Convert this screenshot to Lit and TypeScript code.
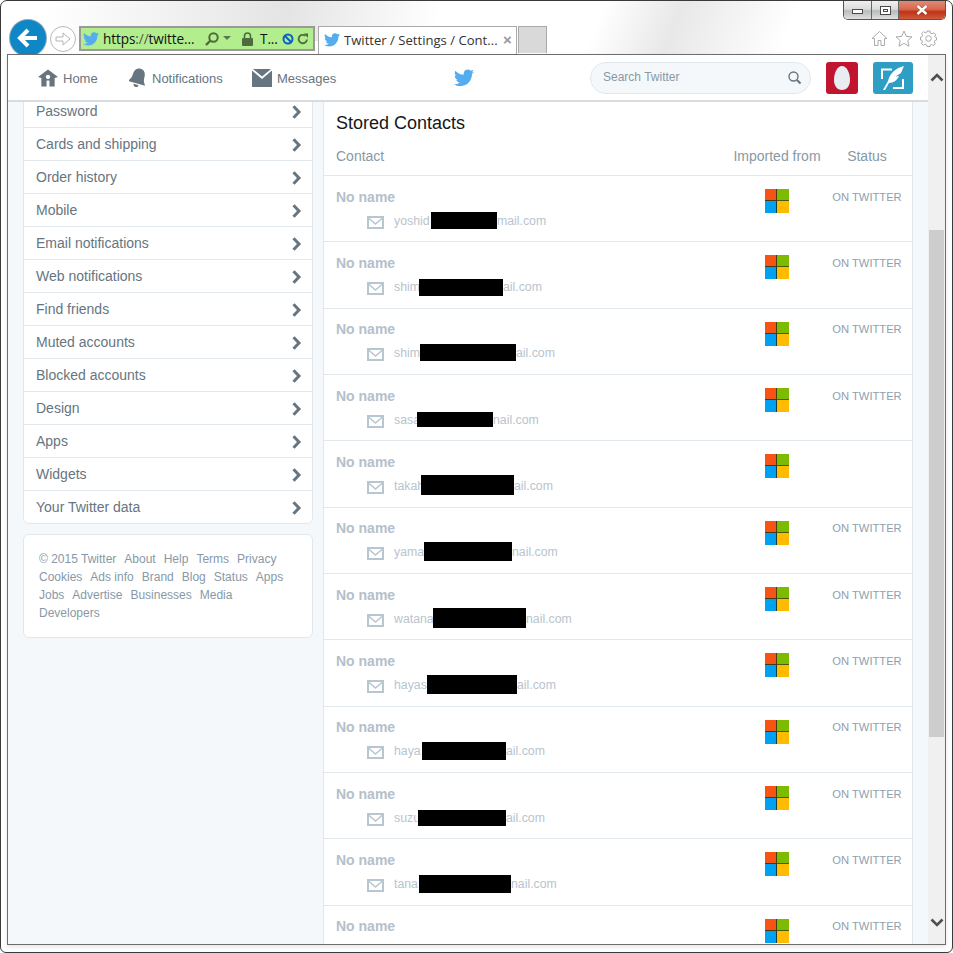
import { LitElement, html, css } from "lit";
import { customElement } from "lit/decorators.js";

const BIRD = "M23.953 4.57a10 10 0 01-2.825.775 4.958 4.958 0 002.163-3.13 9.953 9.953 0 01-3.127 1.184 4.92 4.92 0 00-8.384 4.482C7.69 8.095 4.067 6.13 1.64 3.162a4.822 4.822 0 00-.666 2.475c0 1.71.87 3.213 2.188 4.096a4.904 4.904 0 01-2.228-.616v.06a4.923 4.923 0 003.946 4.827 4.996 4.996 0 01-2.212.085 4.936 4.936 0 004.604 3.417 9.867 9.867 0 01-6.102 2.105c-.39 0-.779-.023-1.17-.067a13.995 13.995 0 007.557 2.209c9.053 0 13.998-7.496 13.998-13.985 0-.21 0-.42-.015-.63A9.935 9.935 0 0024 4.59z";

const bird = (size: number) => html`<svg width=${size} height=${size} viewBox="0 0 24 24"><path fill="#55acee" d=${BIRD}></path></svg>`;

const MENU = ["Password","Cards and shipping","Order history","Mobile","Email notifications","Web notifications","Find friends","Muted accounts","Blocked accounts","Design","Apps","Widgets","Your Twitter data"];
const FOOTER = ["© 2015 Twitter","About","Help","Terms","Privacy","Cookies","Ads info","Brand","Blog","Status","Apps","Jobs","Advertise","Businesses","Media","Developers"];

const TEXT_X = 394;
const MAIL_TOP = 211.7;
const ROW_H = 66.33;
type Contact = { a: string; x: number; w: number; y: number; h: number; b: string; on: boolean };
const CONTACTS: Contact[] = [
  { a: "yoshid", x: 431, w: 66, y: 212, h: 17, b: "mail.com", on: true },
  { a: "shim", x: 419, w: 84, y: 279, h: 17, b: "ail.com", on: true },
  { a: "shim", x: 420, w: 96, y: 344, h: 17, b: "ail.com", on: true },
  { a: "sasa", x: 417, w: 76, y: 412, h: 15, b: "nail.com", on: true },
  { a: "takah", x: 421, w: 93, y: 475, h: 20, b: "ail.com", on: false },
  { a: "yama", x: 424, w: 88, y: 542, h: 19, b: "nail.com", on: true },
  { a: "watana", x: 433, w: 93, y: 608, h: 20, b: "nail.com", on: true },
  { a: "hayas", x: 427, w: 90, y: 675, h: 19, b: "ail.com", on: true },
  { a: "haya", x: 422, w: 84, y: 742, h: 18, b: "ail.com", on: true },
  { a: "suzu", x: 418, w: 88, y: 810, h: 16, b: "ail.com", on: true },
  { a: "tana", x: 419, w: 92, y: 875, h: 18, b: "nail.com", on: true },
  { a: "user.name@hotmail.com", x: 0, w: 0, y: 0, h: 0, b: "", on: true },
];

@customElement("app-root")
export class AppRoot extends LitElement {
  static styles = css`
    :host { display: block; width: 953px; height: 953px; overflow: hidden; font-family: "Liberation Sans", Arial, sans-serif; }
    * { box-sizing: border-box; }
    svg { display: block; flex: none; }
    .window { width: 953px; height: 953px; border: 1px solid #3a3a3a; border-radius: 7px 7px 6px 6px; padding: 0 6px 7px; display: flex; flex-direction: column; overflow: hidden;
      background:
        linear-gradient(112deg, rgba(255,255,255,0) 62%, rgba(228,228,228,.85) 70%, rgba(255,255,255,0) 82%) 0 0 / 100% 60px no-repeat,
        linear-gradient(100deg, rgba(255,255,255,1) 5%, rgba(228,228,228,1) 30%, rgba(255,255,255,1) 46%) 0 0 / 100% 40px no-repeat,
        #fff; }
    .chrome { height: 53px; flex: none; display: flex; flex-direction: column; }
    .caption { height: 19px; flex: none; display: flex; justify-content: flex-end; }
    .caption-btns { display: flex; height: 19px; border: 1px solid #555; border-top: none; border-radius: 0 0 5px 5px; overflow: hidden; }
    .cbtn { width: 27px; display: flex; align-items: center; justify-content: center; background: linear-gradient(#f0f0f0 0%, #dcdcdc 45%, #b8bcbc 55%, #e0e0e0 100%); border-left: 1px solid #666; }
    .cbtn:first-child { border-left: none; }
    .cbtn.close { width: 47px; background: linear-gradient(#e08a75 0%, #d86a50 45%, #bf3218 60%, #cf5a3a 100%); }
    .min { width: 11px; height: 5px; background: #fff; border: 1px solid #4a4a4a; margin-top: 3px; }
    .max { width: 11px; height: 9px; border: 1px solid #4a4a4a; background: #fff; display: flex; align-items: center; justify-content: center; }
    .max i { display: block; width: 5px; height: 3px; border: 1px solid #4a4a4a; }
    .toolbar { flex: 1; min-height: 0; display: flex; align-items: flex-start; padding-left: 3px; }
    .back { width: 36px; height: 36px; border-radius: 50%; background: #0f86c6; box-shadow: 0 0 0 1px #8fa7b5; display: flex; align-items: center; justify-content: center; flex: none; }
    .fwd { width: 26px; height: 26px; margin: 6px 0 0 4px; border-radius: 50%; background: #fff; border: 1px solid #b8b8b8; display: flex; align-items: center; justify-content: center; flex: none; }
    .addr { width: 236px; height: 25px; margin: 6px 0 0 3px; border: 2px solid #9a9a9a; background: #b2ee8e; display: flex; align-items: center; padding-left: 2px; font-size: 13.6px; color: #111; flex: none; font-family: "Open Sans", sans-serif; letter-spacing: -.1px; white-space: nowrap; }
    .addr .url { margin-left: 4px; width: 101px; }
    .addr .url b { font-weight: 400; color: #555; }
    .addr .t { margin: 0 0 0 6px; width: 20px; }
    .tab { width: 199px; height: 28px; margin: 6px 0 0 3px; border: 1px solid #aaa; border-bottom: none; background: #fff; display: flex; align-items: center; padding: 0 0 2px 5px; font-size: 13.1px; color: #333; flex: none; font-family: "Open Sans", sans-serif; white-space: nowrap; }
    .tab span { margin-left: 4px; width: 157px; overflow: hidden; }
    .tab em { font-style: normal; font-weight: 700; font-size: 15px; color: #9a9a9a; margin-left: 2px; font-family: "Liberation Sans", sans-serif; }
    .newtab { width: 29px; height: 27px; margin: 6px 0 0 1px; background: #d9d9d9; border: 1px solid #aaa; border-bottom: none; flex: none; }
    .tools { margin: 10px 9px 0 auto; display: flex; gap: 7px; }
    .frame { flex: 1; min-height: 0; border: 1px solid #6d6d6d; display: flex; background: #f5f8fa; box-shadow: 0 2px 4px rgba(0,0,0,.1); }
    .page { flex: 1; min-width: 0; display: flex; flex-direction: column; }
    .nav { height: 47px; flex: none; background: #fff; border-bottom: 2px solid #d8dce0; display: flex; align-items: flex-start; color: #66757f; font-size: 13px; }
    .navitem { display: flex; align-items: center; height: 46px; }
    .navitem span { margin-left: 5px; }
    .home { margin-left: 30px; width: 91px; }
    .notif { width: 123px; }
    .msg { width: 202px; }
    .navbird { width: 136px; height: 46px; display: flex; align-items: center; }
    .search { width: 221px; height: 32px; margin-top: 7px; border: 1px solid #e1e8ed; border-radius: 16px; background: #f5f8fa; display: flex; align-items: center; justify-content: space-between; padding: 0 8px 2px 12px; font-size: 12px; color: #8899a6; }
    .egg { width: 32px; height: 32px; margin: 7px 0 0 15px; background: #c1152f; border-radius: 3px; display: flex; align-items: center; justify-content: center; }
    .tweet { width: 40px; height: 32px; margin: 7px 0 0 15px; background: #2f9ec4; border-radius: 3px; display: flex; align-items: center; justify-content: center; }
    .content { flex: 1; min-height: 0; overflow: hidden; display: flex; align-items: flex-start; padding-left: 15px; gap: 10px; }
    .left { width: 290px; flex: none; margin-top: -9px; }
    .card { background: #fff; border: 1px solid #e1e8ed; border-radius: 6px; }
    .menu div { height: 33px; border-top: 1px solid #e1e8ed; display: flex; align-items: center; justify-content: space-between; padding: 0 10px 0 12px; font-size: 14px; color: #66757f; }
    .menu div:first-child { border-top: none; padding-top: 1px; }
    .menu svg { margin-top: 2px; }
    .footer { margin-top: 10px; height: 104px; padding: 15px 15px; display: flex; flex-wrap: wrap; align-content: flex-start; font-size: 12px; line-height: 18px; color: #8899a6; }
    .footer span { margin-right: 8px; white-space: nowrap; }
    .right { width: 590px; flex: none; border: 1px solid #e1e8ed; border-top: none; border-bottom: none; background: #fff; }
    h2 { margin: 0; font-size: 18px; font-weight: 400; color: #14171a; line-height: 21px; padding: 11px 0 0 12px; }
    .grid { display: grid; grid-template-columns: 1fr 88px 88px; column-gap: 2px; padding: 0 1px 0 12px; }
    .head { height: 40.9px; align-items: center; font-size: 14px; color: #8899a6; padding-top: 3px; }
    .head span:not(:first-child) { text-align: center; }
    .row { height: 66.33px; border-top: 1px solid #e1e8ed; align-items: start; }
    .who { padding-top: 12.8px; }
    .name { font-size: 14px; font-weight: 700; line-height: 16px; color: #b4c0ca; }
    .mail { display: flex; align-items: center; height: 18px; margin: 7px 0 0 31px; font-size: 12.3px; color: #b8c4ce; white-space: nowrap; }
    .mail .ico { margin-right: 10px; margin-top: 3px; }
    .mail .pre { display: block; flex: none; }
    .mail i { display: block; flex: none; align-self: flex-start; background: #000; }
    .ms { justify-self: center; margin-top: 13px; display: grid; grid-template-columns: 12px 12px; grid-template-rows: 12px 12px; }
    .ms i:nth-child(1) { background: #f65314; border-right: 1px solid #4a3a10; border-bottom: 1px solid #4a3a10; }
    .ms i:nth-child(2) { background: #7cbb00; border-bottom: 1px solid #4a5a10; }
    .ms i:nth-child(3) { background: #00a1f1; border-right: 1px solid #1a3a40; }
    .ms i:nth-child(4) { background: #ffbb00; }
    .status { text-align: center; font-size: 11.2px; line-height: 16px; padding-top: 12.8px; color: #8fa0ae; white-space: nowrap; }
    .scrollbar { width: 17px; flex: none; background: #f0f0f0; display: flex; flex-direction: column; align-items: center; }
    .arrow { height: 45px; display: flex; align-items: center; justify-content: center; flex: none; }
    .track { flex: 1; min-height: 0; width: 100%; padding: 130px 1px 0; }
    .thumb { height: 507px; background: #cdcdcd; }
    .arrow.down { height: 44px; }
  `;

  private msLogo() {
    return html`<div class="ms"><i></i><i></i><i></i><i></i></div>`;
  }

  private chevron() {
    return html`<svg width="10" height="14" viewBox="0 0 10 14"><path d="M1.5 1.2 L7 7 L1.5 12.8" fill="none" stroke="#66757f" stroke-width="3"></path></svg>`;
  }

  private mailIcon() {
    return html`<svg class="ico" width="17" height="13" viewBox="0 0 17 13"><rect x="1" y="1" width="15" height="11" fill="none" stroke="#b8c6d0" stroke-width="2"></rect><path d="M1.5 2 L8.5 8 L15.5 2" fill="none" stroke="#b8c6d0" stroke-width="1.6"></path></svg>`;
  }

  private mailLine(c: Contact, i: number) {
    if (!c.w) return html`<span>${c.a}</span>`;
    const dy = (c.y - (MAIL_TOP + ROW_H * i)).toFixed(2);
    return html`<span class="pre" style="width:${c.x - TEXT_X}px">${c.a}</span><i style="width:${c.w}px;height:${c.h}px;margin-top:${dy}px"></i><span>${c.b}</span>`;
  }

  render() {
    return html`<div class="window">
      <div class="chrome">
        <div class="caption"><div class="caption-btns">
          <div class="cbtn"><div class="min"></div></div>
          <div class="cbtn"><div class="max"><i></i></div></div>
          <div class="cbtn close"><svg width="14" height="10" viewBox="0 0 14 10"><path d="M2.5 1 L11.5 9 M11.5 1 L2.5 9" stroke="#5a2a20" stroke-width="3.4" opacity=".55"></path><path d="M2.5 1 L11.5 9 M11.5 1 L2.5 9" stroke="#fff" stroke-width="2.4"></path></svg></div>
        </div></div>
        <div class="toolbar">
          <div class="back"><svg width="22" height="20" viewBox="0 0 22 20"><path d="M20 10 H3 M11 2 L3 10 L11 18" fill="none" stroke="#fff" stroke-width="4"></path></svg></div>
          <div class="fwd"><svg width="18" height="16" viewBox="0 0 18 16"><path d="M2 6 H9 V2 L16 8 L9 14 V10 H2 Z" fill="#fff" stroke="#b5b5b5" stroke-width="1"></path></svg></div>
          <div class="addr">
            ${bird(16)}
            <span class="url">https<b>://</b>twitte...</span>
            <svg width="16" height="16" viewBox="0 0 16 16"><circle cx="9.5" cy="6.5" r="4.2" fill="none" stroke="#4e6b3e" stroke-width="2"></circle><path d="M6.5 9.5 L2 14" stroke="#4e6b3e" stroke-width="2.4"></path></svg>
            <svg style="margin-left:3px" width="9" height="6" viewBox="0 0 9 6"><path d="M0 0 H8 L4 4 Z" fill="#5a7a4a"></path></svg>
            <svg style="margin-left:9px" width="13" height="14" viewBox="0 0 13 14"><path d="M3.5 6 V4 a3 3 0 0 1 6 0 V6" fill="none" stroke="#4e6b3e" stroke-width="1.6"></path><rect x="1" y="6" width="11" height="8" rx="1" fill="#4e6b3e"></rect></svg>
            <span class="t">T...</span>
            <svg style="margin-left:2px" width="12" height="12" viewBox="0 0 12 12"><circle cx="6" cy="6" r="4.5" fill="none" stroke="#0a5fc4" stroke-width="2"></circle><path d="M3 3 L9 9" stroke="#0a5fc4" stroke-width="2"></path></svg>
            <svg style="margin-left:3px" width="12" height="12" viewBox="0 0 12 12"><path d="M10 6.5 A4.2 4.2 0 1 1 8.5 2.8" fill="none" stroke="#4e6b3e" stroke-width="1.8"></path><path d="M7 0.5 H11 V5 Z" fill="#4e6b3e"></path></svg>
          </div>
          <div class="tab">${bird(16)}<span>Twitter / Settings / Cont...</span><em>×</em></div>
          <div class="newtab"></div>
          <div class="tools">
            <svg width="17" height="17" viewBox="0 0 17 17"><path d="M1 8.5 L8.5 1.5 L16 8.5 H13.5 V15.5 H10 V10.5 H7 V15.5 H3.5 V8.5 Z" fill="#fff" stroke="#aaa"></path></svg>
            <svg width="18" height="17" viewBox="0 0 18 17"><path d="M9 1 L11.3 6.4 L17 6.9 L12.7 10.7 L14 16.3 L9 13.3 L4 16.3 L5.3 10.7 L1 6.9 L6.7 6.4 Z" fill="#fff" stroke="#aaa"></path></svg>
            <svg width="17" height="17" viewBox="0 0 17 17"><circle cx="8.5" cy="8.5" r="2.8" fill="none" stroke="#aaa"></circle><path d="M7 1 H10 L10.4 3 L12.2 3.8 L14 2.7 L16 4.9 L14.6 6.5 L15.2 7.2 L16.5 7.5 V10 L15 10.4 L14.3 12 L15.3 13.8 L13.3 15.5 L11.7 14.5 L10.2 15 L10 16.5 H7 L6.7 15 L5 14.3 L3.4 15.4 L1.4 13.4 L2.5 11.8 L1.8 10.2 L0.5 10 V7.2 L2 6.8 L2.7 5.2 L1.6 3.6 L3.6 1.7 L5.2 2.8 L6.8 2.2 Z" fill="none" stroke="#aaa"></path></svg>
          </div>
        </div>
      </div>
      <div class="frame">
        <div class="page">
          <div class="nav">
            <div class="navitem home">
              <svg width="20" height="18" viewBox="0 0 21 18"><path fill-rule="evenodd" fill="#66757f" d="M10.5 0 L21 8 L17.5 9 V18 H3.5 V9 L0 8 Z M10.5 5.6 a2.3 2.3 0 1 0 .01 0 Z M9 11.5 V18 H12 V11.5 Z"></path></svg>
              <span>Home</span>
            </div>
            <div class="navitem notif">
              <svg width="18" height="20" viewBox="0 0 18 20"><g transform="rotate(16 9 10)" fill="#66757f"><path d="M9 0.5 C13 0.5 15 3.5 15 8 C15 11 16 13 18 15.5 H0 C2 13 3 11 3 8 C3 3.5 5 0.5 9 0.5 Z"></path><path d="M6.5 16.8 H11.5 A2.5 2.5 0 0 1 6.5 16.8 Z"></path></g></svg>
              <span>Notifications</span>
            </div>
            <div class="navitem msg">
              <svg width="20" height="18" viewBox="0 0 20 18"><path fill="#66757f" d="M1 0 H19 L10 7.5 Z M0 1.5 L10 10 L20 1.5 V18 H0 Z"></path></svg>
              <span>Messages</span>
            </div>
            <div class="navbird">${bird(20)}</div>
            <div class="search"><span>Search Twitter</span><svg width="15" height="15" viewBox="0 0 15 15"><circle cx="6.5" cy="6.5" r="4.5" fill="none" stroke="#66757f" stroke-width="1.4"></circle><path d="M10 10 L13.5 13.5" stroke="#66757f" stroke-width="2"></path></svg></div>
            <div class="egg"><svg width="16" height="24" viewBox="0 0 16 24"><path fill="#e9edf2" d="M8 0 C12.8 0 16 7 16 14 C16 20 12.8 24 8 24 C3.2 24 0 20 0 14 C0 7 3.2 0 8 0 Z"></path></svg></div>
            <div class="tweet"><svg width="24" height="24" viewBox="0 0 24 24"><path fill="none" stroke="#fff" stroke-width="2" d="M11 3.5 H1 V13 M12 22 H22 V13"></path><path fill="#fff" d="M23 0 C15 2 9 7 7 15 L2 24 L4 24 L8 17 C13 17 16 14 18 10 L14.5 10.5 L20 7 C21 5 22 2 23 0 Z"></path></svg></div>
          </div>
          <div class="content">
            <div class="left">
              <div class="card menu">
                ${MENU.map((m) => html`<div><span>${m}</span>${this.chevron()}</div>`)}
              </div>
              <div class="card footer">
                ${FOOTER.map((f) => html`<span>${f}</span>`)}
              </div>
            </div>
            <div class="right">
              <h2>Stored Contacts</h2>
              <div class="grid head"><span>Contact</span><span>Imported from</span><span>Status</span></div>
              ${CONTACTS.map((c, i) => html`<div class="grid row">
                <div class="who">
                  <div class="name">No name</div>
                  <div class="mail">${this.mailIcon()}${this.mailLine(c, i)}</div>
                </div>
                ${this.msLogo()}
                <div class="status">${c.on ? "ON TWITTER" : ""}</div>
              </div>`)}
            </div>
          </div>
        </div>
        <div class="scrollbar">
          <div class="arrow"><svg width="14" height="9" viewBox="0 0 14 9"><path d="M1.5 7.5 L7 2 L12.5 7.5" fill="none" stroke="#505050" stroke-width="2.6"></path></svg></div>
          <div class="track"><div class="thumb"></div></div>
          <div class="arrow down"><svg width="14" height="9" viewBox="0 0 14 9"><path d="M1.5 1.5 L7 7 L12.5 1.5" fill="none" stroke="#505050" stroke-width="2.6"></path></svg></div>
        </div>
      </div>
    </div>`;
  }
}
